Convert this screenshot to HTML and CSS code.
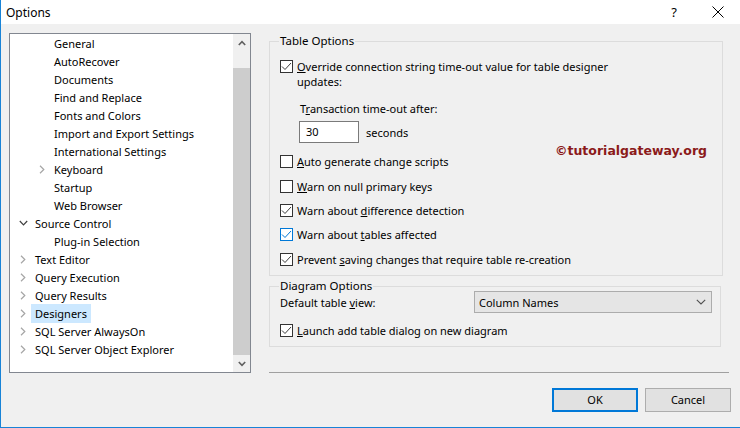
FILE: index.html
```html
<!DOCTYPE html>
<html lang="en">
<head>
    <meta charset="UTF-8">
    <title>Options</title>
    <link rel="stylesheet" href="styles.css">
</head>
<body>
<div class="window">
    <div class="titlebar">
        <span class="title">Options</span>
        <span class="help">?</span>
        <span class="close">
            <svg width="12" height="12" viewBox="0 0 12 12"><path d="M0.5 0.5L11.5 11.5M11.5 0.5L0.5 11.5" stroke="#000" stroke-width="1" fill="none"/></svg>
        </span>
    </div>

    <div class="main">
        <!-- tree -->
        <div class="tree">
            <ul class="tree-list">
                <li class="node lv2"><span class="exp"></span><span class="label">General</span></li>
                <li class="node lv2"><span class="exp"></span><span class="label">AutoRecover</span></li>
                <li class="node lv2"><span class="exp"></span><span class="label">Documents</span></li>
                <li class="node lv2"><span class="exp"></span><span class="label">Find and Replace</span></li>
                <li class="node lv2"><span class="exp"></span><span class="label">Fonts and Colors</span></li>
                <li class="node lv2"><span class="exp"></span><span class="label">Import and Export Settings</span></li>
                <li class="node lv2"><span class="exp"></span><span class="label">International Settings</span></li>
                <li class="node lv2"><span class="exp"><svg width="6" height="9" viewBox="0 0 6 9"><path d="M1 0.8L4.8 4.5L1 8.2" stroke="#a6a6a6" stroke-width="1.2" fill="none"/></svg></span><span class="label">Keyboard</span></li>
                <li class="node lv2"><span class="exp"></span><span class="label">Startup</span></li>
                <li class="node lv2"><span class="exp"></span><span class="label">Web Browser</span></li>
                <li class="node lv1"><span class="exp"><svg width="9" height="6" viewBox="0 0 9 6"><path d="M0.8 1L4.5 4.8L8.2 1" stroke="#404040" stroke-width="1.2" fill="none"/></svg></span><span class="label">Source Control</span></li>
                <li class="node lv2"><span class="exp"></span><span class="label">Plug-in Selection</span></li>
                <li class="node lv1"><span class="exp"><svg width="6" height="9" viewBox="0 0 6 9"><path d="M1 0.8L4.8 4.5L1 8.2" stroke="#a6a6a6" stroke-width="1.2" fill="none"/></svg></span><span class="label">Text Editor</span></li>
                <li class="node lv1"><span class="exp"><svg width="6" height="9" viewBox="0 0 6 9"><path d="M1 0.8L4.8 4.5L1 8.2" stroke="#a6a6a6" stroke-width="1.2" fill="none"/></svg></span><span class="label">Query Execution</span></li>
                <li class="node lv1"><span class="exp"><svg width="6" height="9" viewBox="0 0 6 9"><path d="M1 0.8L4.8 4.5L1 8.2" stroke="#a6a6a6" stroke-width="1.2" fill="none"/></svg></span><span class="label">Query Results</span></li>
                <li class="node lv1 selected"><span class="exp"><svg width="6" height="9" viewBox="0 0 6 9"><path d="M1 0.8L4.8 4.5L1 8.2" stroke="#a6a6a6" stroke-width="1.2" fill="none"/></svg></span><span class="label">Designers</span></li>
                <li class="node lv1"><span class="exp"><svg width="6" height="9" viewBox="0 0 6 9"><path d="M1 0.8L4.8 4.5L1 8.2" stroke="#a6a6a6" stroke-width="1.2" fill="none"/></svg></span><span class="label">SQL Server AlwaysOn</span></li>
                <li class="node lv1"><span class="exp"><svg width="6" height="9" viewBox="0 0 6 9"><path d="M1 0.8L4.8 4.5L1 8.2" stroke="#a6a6a6" stroke-width="1.2" fill="none"/></svg></span><span class="label">SQL Server Object Explorer</span></li>
            </ul>
            <div class="scrollbar">
                <div class="sb-btn"><svg width="8" height="6" viewBox="0 0 8 6"><path d="M0.8 5L4 1.6L7.2 5" stroke="#606060" stroke-width="1.6" fill="none"/></svg></div>
                <div class="sb-track"><div class="sb-thumb"></div></div>
                <div class="sb-btn"><svg width="8" height="6" viewBox="0 0 8 6"><path d="M0.8 1L4 4.4L7.2 1" stroke="#606060" stroke-width="1.6" fill="none"/></svg></div>
            </div>
        </div>

        <!-- options pane -->
        <div class="pane">
            <fieldset class="group group-table">
                <legend>Table Options</legend>
                <div class="check-row first">
                    <span class="chk"><svg width="11" height="11" viewBox="0 0 11 11"><path d="M1 5.5L4 8.5L10 2" stroke="#3c3c3c" stroke-width="1" fill="none"/></svg></span>
                    <span class="text"><u>O</u>verride connection string time-out value for table designer<br>updates:</span>
                </div>
                <div class="timeout-label">T<u>r</u>ansaction time-out after:</div>
                <div class="timeout-row">
                    <span class="num-input">30</span>
                    <span class="unit">seconds</span>
                </div>
                <div class="check-row after-input">
                    <span class="chk"></span>
                    <span class="text"><u>A</u>uto generate change scripts</span>
                </div>
                <div class="check-row">
                    <span class="chk"></span>
                    <span class="text"><u>W</u>arn on null primary keys</span>
                </div>
                <div class="check-row tight">
                    <span class="chk"><svg width="11" height="11" viewBox="0 0 11 11"><path d="M1 5.5L4 8.5L10 2" stroke="#3c3c3c" stroke-width="1" fill="none"/></svg></span>
                    <span class="text">Warn about <u>d</u>ifference detection</span>
                </div>
                <div class="check-row tight">
                    <span class="chk hover"><svg width="11" height="11" viewBox="0 0 11 11"><path d="M1 5.5L4 8.5L10 2" stroke="#0078d7" stroke-width="1" fill="none"/></svg></span>
                    <span class="text">Warn about <u>t</u>ables affected</span>
                </div>
                <div class="check-row">
                    <span class="chk"><svg width="11" height="11" viewBox="0 0 11 11"><path d="M1 5.5L4 8.5L10 2" stroke="#3c3c3c" stroke-width="1" fill="none"/></svg></span>
                    <span class="text">Prevent <u>s</u>aving changes that require table re-creation</span>
                </div>
                <div class="watermark">©tutorialgateway.org</div>
            </fieldset>

            <fieldset class="group group-diagram">
                <legend>Diagram Options</legend>
                <div class="view-row">
                    <span class="view-label">Default table <u>v</u>iew:</span>
                    <span class="combo">
                        <span>Column Names</span>
                        <svg width="10" height="6" viewBox="0 0 10 6"><path d="M0.8 0.8L5 5L9.2 0.8" stroke="#505050" stroke-width="1.1" fill="none"/></svg>
                    </span>
                </div>
                <div class="check-row">
                    <span class="chk"><svg width="11" height="11" viewBox="0 0 11 11"><path d="M1 5.5L4 8.5L10 2" stroke="#3c3c3c" stroke-width="1" fill="none"/></svg></span>
                    <span class="text"><u>L</u>aunch add table dialog on new diagram</span>
                </div>
            </fieldset>

            <div class="separator"></div>

            <div class="buttons">
                <span class="btn default">OK</span>
                <span class="btn">Cancel</span>
            </div>
        </div>
    </div>
</div>
</body>
</html>
```

FILE: styles.css
```css
html, body {
    margin: 0;
    padding: 0;
}

body {
    width: 740px;
    height: 428px;
    overflow: hidden;
    background: #f0f0f0;
    font-family: "Noto Sans", "DejaVu Sans", sans-serif;
    font-size: 11px;
    color: #000000;
}

ul, li, fieldset, legend {
    margin: 0;
    padding: 0;
}

.window {
    box-sizing: border-box;
    width: 740px;
    height: 428px;
    border-left: 1px solid #1883d7;
    border-bottom: 1px solid #1883d7;
}

/* title bar */
.titlebar {
    display: flex;
    align-items: center;
    height: 24px;
    background: #ffffff;
    padding-left: 5px;
    font-size: 12px;
}

.title {
    flex: 1;
}

.help {
    width: 44px;
    text-align: center;
    font-size: 13px;
}

.close {
    display: flex;
    justify-content: center;
    width: 44px;
}

/* main area */
.main {
    display: flex;
    align-items: flex-start;
    padding: 9px 0 0 8px;
}

/* tree */
.tree {
    display: flex;
    box-sizing: border-box;
    width: 242px;
    height: 340px;
    border: 1px solid #828790;
    background: #ffffff;
}

.tree-list {
    flex: 1;
    list-style: none;
}

.node {
    display: flex;
    align-items: center;
    height: 18px;
    white-space: nowrap;
}

.node.lv1 {
    padding-left: 5px;
}

.node.lv2 {
    padding-left: 24px;
}

.exp {
    display: flex;
    align-items: center;
    justify-content: center;
    width: 16px;
    height: 18px;
}

.label {
    padding: 0 4px;
    line-height: 19px;
}

.selected .label {
    background: #cce8ff;
}

.scrollbar {
    display: flex;
    flex-direction: column;
    width: 17px;
    background: #f0f0f0;
}

.sb-btn {
    display: flex;
    align-items: center;
    justify-content: center;
    height: 17px;
}

.sb-track {
    flex: 1;
    padding-top: 17px;
    display: flex;
}

.sb-thumb {
    flex: 1;
    background: #cdcdcd;
}

/* right pane */
.pane {
    width: 462px;
    margin-left: 18px;
}

.group {
    border: 1px solid #dcdcdc;
    padding: 0 0 0 10px;
}

.group legend {
    margin-left: -1px;
    padding: 0 1px;
    line-height: 16px;
    font-size: 11.5px;
}

.group-table {
    position: relative;
    width: 454px;
    box-sizing: border-box;
    padding-bottom: 8px;
}

.group-diagram {
    width: 452px;
    box-sizing: border-box;
    margin-top: 2px;
    padding-bottom: 8px;
}

.check-row {
    display: flex;
    align-items: flex-start;
    margin-top: 10px;
    line-height: 15px;
}

.check-row.tight {
    margin-top: 9px;
}

.check-row.after-input {
    margin-top: 11px;
}

.chk {
    box-sizing: border-box;
    display: flex;
    align-items: center;
    justify-content: center;
    flex: none;
    width: 13px;
    height: 13px;
    margin-top: 1px;
    margin-right: 4px;
    border: 1px solid #333333;
    background: #ffffff;
}

.chk.hover {
    border-color: #0078d7;
}

.timeout-label {
    margin: 12px 0 0 20px;
    line-height: 15px;
}

.timeout-row {
    display: flex;
    align-items: center;
    margin: 5px 0 0 19px;
}

.num-input {
    box-sizing: border-box;
    width: 60px;
    height: 22px;
    line-height: 20px;
    padding-left: 6px;
    border: 1px solid #7a7a7a;
    background: #ffffff;
}

.unit {
    margin-left: 7px;
}

.watermark {
    position: absolute;
    left: 285px;
    top: 94px;
    font-family: "DejaVu Sans", Verdana, sans-serif;
    font-weight: bold;
    font-size: 12.5px;
    color: #8b1a1a;
}

.view-row {
    display: flex;
    align-items: center;
    justify-content: space-between;
    margin-top: -3px;
    padding-right: 8px;
}

.combo {
    box-sizing: border-box;
    display: flex;
    align-items: center;
    justify-content: space-between;
    width: 238px;
    height: 22px;
    padding: 0 5px 0 4px;
    border: 1px solid #acacac;
    background: #e5e5e5;
}

.separator {
    height: 1px;
    width: 460px;
    margin-top: 25px;
    background: #a0a0a0;
}

.buttons {
    display: flex;
    justify-content: flex-end;
    gap: 7px;
    margin-top: 15px;
}

.btn {
    box-sizing: border-box;
    width: 86px;
    height: 24px;
    line-height: 22px;
    text-align: center;
    border: 1px solid #adadad;
    background: #e1e1e1;
}

.btn.default {
    border: 2px solid #0078d7;
    line-height: 20px;
}
```
